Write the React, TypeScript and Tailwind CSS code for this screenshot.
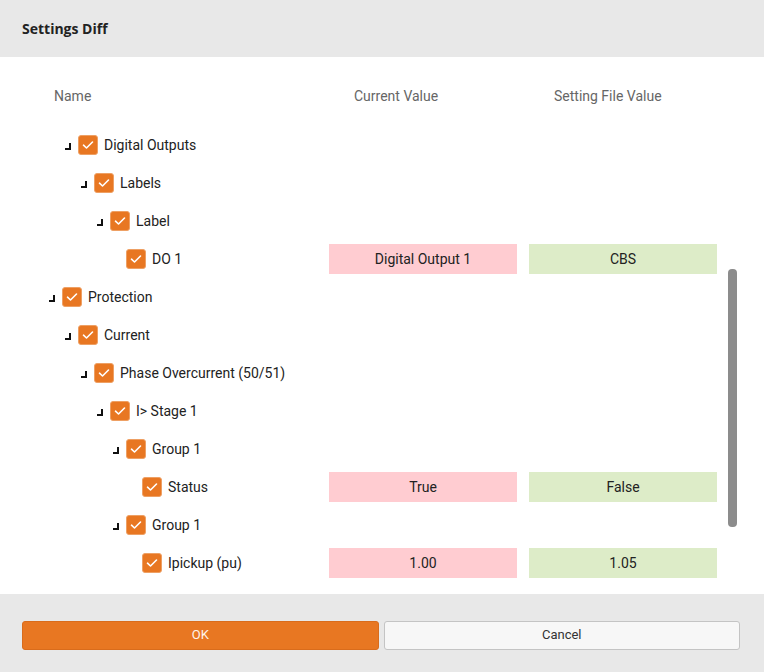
import React from 'react'

type Row = {
  label: string
  level: number
  branch: boolean
  current?: string
  file?: string
}

const ROWS: Row[] = [
  { label: 'Digital Outputs', level: 1, branch: true },
  { label: 'Labels', level: 2, branch: true },
  { label: 'Label', level: 3, branch: true },
  { label: 'DO 1', level: 4, branch: false, current: 'Digital Output 1', file: 'CBS' },
  { label: 'Protection', level: 0, branch: true },
  { label: 'Current', level: 1, branch: true },
  { label: 'Phase Overcurrent (50/51)', level: 2, branch: true },
  { label: 'I> Stage 1', level: 3, branch: true },
  { label: 'Group 1', level: 4, branch: true },
  { label: 'Status', level: 5, branch: false, current: 'True', file: 'False' },
  { label: 'Group 1', level: 4, branch: true },
  { label: 'Ipickup (pu)', level: 5, branch: false, current: '1.00', file: '1.05' },
]

function CheckBox() {
  return (
    <div className="w-[20px] h-[20px] rounded-[3px] bg-[#e87722] border border-[#eea064] flex items-center justify-center shrink-0">
      <svg width="12" height="10" viewBox="0 0 12 10" fill="none">
        <path d="M1.5 5.2 L4.5 8 L10.5 2" stroke="#ffffff" strokeWidth="1.6" strokeLinecap="round" strokeLinejoin="round" />
      </svg>
    </div>
  )
}

function TreeRow({ row }: { row: Row }) {
  return (
    <div className="flex items-center h-[38px]">
      <div className="w-[329px] flex items-center" style={{ paddingLeft: 46 + row.level * 16 }}>
        <div className="w-[16px] h-[20px] flex items-center shrink-0">
          {row.branch && <div className="ml-[3px] mt-[3px] w-[6px] h-[7px] border-r-2 border-b-2 border-[#111]" />}
        </div>
        <CheckBox />
        <span className="ml-[6px] text-[14px] text-[#222] whitespace-nowrap">{row.label}</span>
      </div>
      {row.current !== undefined && (
        <>
          <div className="w-[188px] h-[30px] bg-[#ffccd1] flex items-center justify-center text-[14px] text-[#222]">
            {row.current}
          </div>
          <div className="ml-[12px] w-[188px] h-[30px] bg-[#ddecc8] flex items-center justify-center text-[14px] text-[#222]">
            {row.file}
          </div>
        </>
      )}
    </div>
  )
}

export default function App() {
  return (
    <div className="w-[764px] h-[672px] flex flex-col bg-white" style={{ fontFamily: 'Roboto, "Liberation Sans", sans-serif' }}>
      <div className="h-[57px] bg-[#e8e8e8] flex items-center px-[22px]">
        <h1 className="text-[14px] font-bold text-[#222]" style={{ fontFamily: '"Open Sans", Roboto, sans-serif' }}>
          Settings Diff
        </h1>
      </div>

      <div className="relative flex-1 pt-[20px]">
        <div className="flex items-center h-[38px] text-[14px] text-[#666]">
          <div className="w-[329px] pl-[54px]">Name</div>
          <div className="w-[188px] pl-[25px]">Current Value</div>
          <div className="ml-[12px] w-[188px] pl-[25px]">Setting File Value</div>
        </div>
        <div className="mt-[11px]">
          {ROWS.map((row, i) => (
            <TreeRow key={i} row={row} />
          ))}
        </div>
        {/* scroll thumb */}
        <div className="absolute left-[728px] top-[212px] w-[9px] h-[258px] rounded-[4px] bg-[#8c8c8c]" />
      </div>

      <div className="h-[78px] bg-[#e8e8e8] flex items-center gap-[5px] pl-[22px] pr-[24px] pt-[4px]">
        <button className="flex-1 h-[29px] rounded-[3px] bg-[#e87722] border border-[#d96c1c] text-[13px] text-[#fff4ea]">
          OK
        </button>
        <button className="flex-1 h-[29px] rounded-[3px] bg-[#f7f7f7] border border-[#c4c4c4] text-[13px] text-[#333]">
          Cancel
        </button>
      </div>
    </div>
  )
}
